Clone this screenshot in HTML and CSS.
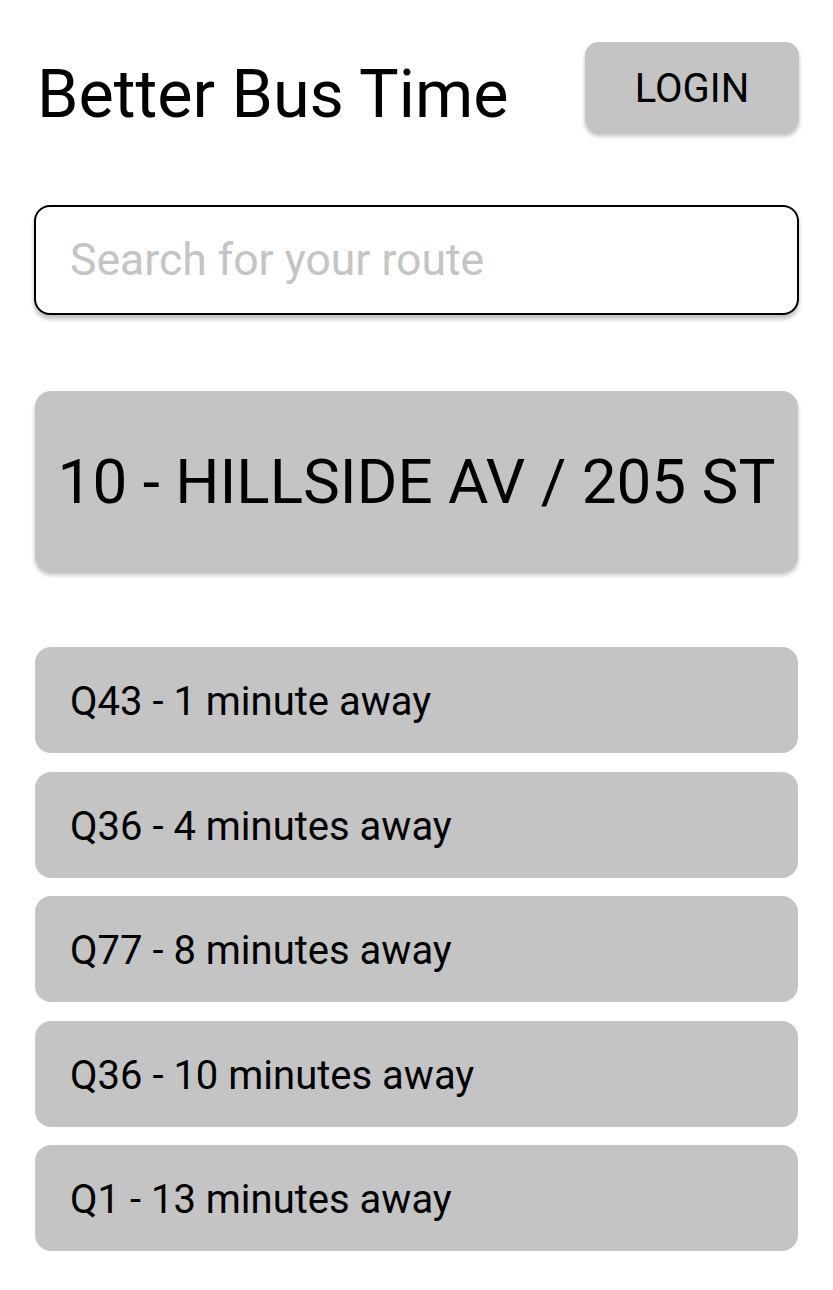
FILE: index.html
```html
<!DOCTYPE html>
<html lang="en">
<head>
<meta charset="utf-8">
<title>Better Bus Time</title>
<link rel="stylesheet" href="styles.css">
</head>
<body>
<main class="app">
  <header class="header">
    <h1 class="title">Better Bus Time</h1>
    <button class="login">LOGIN</button>
  </header>
  <input class="search" type="text" placeholder="Search for your route">
  <section class="stop">10 - HILLSIDE AV / 205 ST</section>
  <ul class="arrivals">
    <li class="arrival">Q43 - 1 minute away</li>
    <li class="arrival">Q36 - 4 minutes away</li>
    <li class="arrival">Q77 - 8 minutes away</li>
    <li class="arrival">Q36 - 10 minutes away</li>
    <li class="arrival">Q1 - 13 minutes away</li>
  </ul>
</main>
</body>
</html>
```

FILE: styles.css
```css
* { box-sizing: border-box; }

html, body {
  margin: 0;
  padding: 0;
  background: #ffffff;
}

body {
  font-family: Roboto, "Noto Sans", "Liberation Sans", sans-serif;
  color: #000;
}

.app {
  display: flex;
  flex-direction: column;
  padding: 42px 35px 0 35px;
}

.header {
  display: flex;
  justify-content: space-between;
  align-items: flex-start;
}

.title {
  margin: 19px 0 0 2px;
  font-size: 66.5px;
  line-height: 1;
  font-weight: 400;
}

.login {
  width: 214px;
  height: 90px;
  margin-right: -1px;
  border: none;
  border-radius: 14px;
  background: #c4c4c4;
  box-shadow: 0 4px 4px rgba(0, 0, 0, 0.25);
  font-family: inherit;
  font-size: 40px;
  color: #000;
  padding: 2px 0 0 0;
}

.search {
  display: block;
  width: calc(100% + 2px);
  margin: 73px -1px 0 -1px;
  height: 110px;
  border: 2px solid #000;
  border-radius: 16px;
  background: #fff;
  box-shadow: 0 4px 4px rgba(0, 0, 0, 0.25);
  padding: 0 0 0 34px;
  font-family: inherit;
  font-size: 44.5px;
  color: #000;
  outline: none;
}

.search::placeholder {
  color: #c4c4c4;
  opacity: 1;
}

.stop {
  margin-top: 76px;
  height: 180px;
  border-radius: 16px;
  background: #c4c4c4;
  box-shadow: 0 4px 4px rgba(0, 0, 0, 0.25);
  display: flex;
  align-items: center;
  justify-content: center;
  font-size: 62px;
  white-space: nowrap;
}

.arrivals {
  list-style: none;
  margin: 76px 0 0 0;
  padding: 0;
  display: flex;
  flex-direction: column;
  gap: 18.5px;
}

.arrival {
  height: 106px;
  border-radius: 16px;
  background: #c4c4c4;
  display: flex;
  align-items: center;
  padding: 3px 0 0 35px;
  font-size: 40px;
}
```
